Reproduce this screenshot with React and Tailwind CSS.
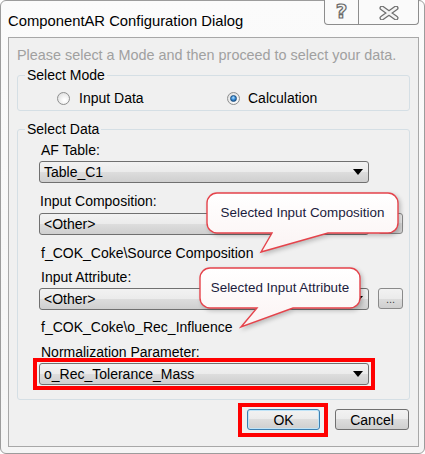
import React from 'react';

const btnGrad =
    'bg-[linear-gradient(to_bottom,#f2f2f2_0%,#ebebeb_50%,#dddddd_50%,#cfcfcf_100%)]';

function Combo({ text }) {
    return (
        <div className={`h-[22px] w-[330px] shrink-0 rounded-[3px] border border-[#707070] ${btnGrad} flex items-center pl-[4px] pr-[5px] text-[14px] leading-[16px]`}>
            <span>{text}</span>
            <svg className="ml-auto" width="10" height="6" viewBox="0 0 10 6">
                <polygon points="0,0 10,0 5,6" fill="#000" />
            </svg>
        </div>
    );
}

function DotsButton() {
    return (
        <div className={`ml-[9px] h-[21px] w-[25px] rounded-[3px] border border-[#8a8a8a] ${btnGrad} flex items-end justify-center pb-[3px] text-[11px] leading-none text-[#444]`}>
            ...
        </div>
    );
}

function Radio({ checked }) {
    return (
        <span className="w-[13px] h-[13px] rounded-full border border-[#8e8f8f] bg-[radial-gradient(circle_at_60%_65%,#ffffff_10%,#dcdcdc_90%)] flex items-center justify-center shrink-0">
            {checked && (
                <span className="w-[7px] h-[7px] rounded-full border border-[#1d4f7f] bg-[radial-gradient(circle_at_45%_35%,#b8e2ff_0%,#3a8ed8_45%,#0d3f78_100%)]" />
            )}
        </span>
    );
}

function Callout({ left, top, w, tail, text }) {
    const h = 40;
    const r = 10;
    const [a, tipX, tipY, b] = tail;
    const d = `M${r},0 H${w - r} A${r},${r} 0 0 1 ${w},${r} V${h - r} A${r},${r} 0 0 1 ${w - r},${h} H${b} L${tipX},${tipY} L${a},${h} H${r} A${r},${r} 0 0 1 0,${h - r} V${r} A${r},${r} 0 0 1 ${r},0 Z`;
    return (
        <div className="absolute" style={{ left, top, width: w, height: h }}>
            <svg
                className="absolute left-0 top-0 overflow-visible drop-shadow-[2px_2px_2px_rgba(0,0,0,0.22)]"
                width={w}
                height={h}
            >
                <defs>
                    <linearGradient id={`cg${left}`} x1="0" y1="0" x2="0" y2="1">
                        <stop offset="0" stopColor="#ffffff" />
                        <stop offset="1" stopColor="#fbf3f3" />
                    </linearGradient>
                </defs>
                <path d={d} fill={`url(#cg${left})`} stroke="#e5434b" strokeWidth="1.4" />
            </svg>
            <div className="relative h-full flex items-center justify-center text-[13.4px] text-[#1b1b3d]">
                {text}
            </div>
        </div>
    );
}

export default function App() {
    return (
        <div className="relative w-[425px] h-[454px] bg-white font-['Liberation_Sans',Arial,sans-serif] text-black">
            <div className="h-[454px] rounded-[6px] border border-[#9c9c9c] bg-[linear-gradient(to_bottom,#fbfbfb,#f5f5f5)] flex flex-col">
                {/* title bar */}
                <div className="h-[36px] flex items-start">
                    <div className="pl-[7px] pt-[10px] text-[14.8px] leading-[20px] text-black">
                        ComponentAR Configuration Dialog
                    </div>
                    <div className="ml-auto mr-[5px] flex h-[25px] -mt-[1px]">
                        <div className="w-[35px] h-full border border-t-0 border-[#8d8d8d] rounded-bl-[4px] bg-[#fafafa] flex items-center justify-center">
                            <span className="font-['DejaVu_Sans',sans-serif] font-bold text-[20px] leading-none text-[#f4f4f4] [-webkit-text-stroke:1.2px_#6a6a6a] -mt-[3px]">
                                ?
                            </span>
                        </div>
                        <div className="w-[60px] h-full border border-t-0 border-l-0 border-[#8d8d8d] rounded-br-[4px] bg-[#fafafa] flex items-center justify-center">
                            <svg width="20" height="14" viewBox="0 0 20 14" className="mt-[1px]">
                                <path d="M3,2 L17,12 M17,2 L3,12" stroke="#6f6f6f" strokeWidth="5" strokeLinecap="round" />
                                <path d="M3,2 L17,12 M17,2 L3,12" stroke="#f4f4f4" strokeWidth="2.6" strokeLinecap="round" />
                            </svg>
                        </div>
                    </div>
                </div>

                {/* client area */}
                <div className="ml-[7px] w-[411px] h-[410px] border border-[#a8a8a8] bg-[#f0f0f0] px-[8px] pt-[9px] flex flex-col text-[14px] leading-[16px]">
                    <div className="text-[14.4px] text-[#a0a0a0]">
                        Please select a Mode and then proceed to select your data.
                    </div>

                    <fieldset className="mt-[4px] border border-[#d5dfe5] rounded-[3px] pb-[4px]">
                        <legend className="ml-[7px] px-[2px] leading-[16px]">Select Mode</legend>
                        <div className="mt-[7px] h-[16px] pl-[39px] flex items-center">
                            <div className="w-[170px] flex items-center gap-[9px]">
                                <Radio />
                                <span>Input Data</span>
                            </div>
                            <div className="flex items-center gap-[8px]">
                                <Radio checked />
                                <span>Calculation</span>
                            </div>
                        </div>
                    </fieldset>

                    <fieldset className="mt-[10px] border border-[#d5dfe5] rounded-[3px] pb-[14px]">
                        <legend className="ml-[7px] px-[2px] leading-[16px]">Select Data</legend>
                        <div className="pl-[21px] flex flex-col">
                            <div className="mt-[5px] pl-[2px] h-[16px]">AF Table:</div>
                            <div className="mt-[3px]">
                                <Combo text="Table_C1" />
                            </div>
                            <div className="mt-[10px] pl-[1px] h-[16px]">Input Composition:</div>
                            <div className="mt-[4px] flex items-start">
                                <Combo text="<Other>" />
                                <DotsButton />
                            </div>
                            <div className="mt-[10px] pl-[2px] h-[16px]">f_COK_Coke\Source Composition</div>
                            <div className="mt-[8px] pl-[2px] h-[16px]">Input Attribute:</div>
                            <div className="mt-[3px] flex items-start">
                                <Combo text="<Other>" />
                                <DotsButton />
                            </div>
                            <div className="mt-[9px] pl-[2px] h-[16px]">f_COK_Coke\o_Rec_Influence</div>
                            <div className="mt-[9px] pl-[2px] h-[16px]">Normalization Parameter:</div>
                            <div className="mt-[3px] relative w-[330px]">
                                <Combo text="o_Rec_Tolerance_Mass" />
                                <div className="absolute -left-[6px] -right-[6px] -top-[5px] -bottom-[5px] border-4 border-[#ff0000]" />
                            </div>
                        </div>
                    </fieldset>

                    <div className="mt-[9px] flex justify-end gap-[15px] pr-[1px]">
                        <div className="relative">
                            <button
                                type="button"
                                className={`w-[73px] h-[21px] rounded-[3px] border border-[#3c7fb1] ${btnGrad} shadow-[inset_0_0_0_1px_#bfe4f8] text-[14px] leading-none`}
                            >
                                OK
                            </button>
                            <div className="absolute -left-[9px] -right-[8px] -top-[6px] -bottom-[7px] border-4 border-[#ff0000]" />
                        </div>
                        <button
                            type="button"
                            className={`w-[74px] h-[21px] rounded-[3px] border border-[#707070] ${btnGrad} text-[14px] leading-none`}
                        >
                            Cancel
                        </button>
                    </div>
                </div>
            </div>

            {/* annotation callouts */}
            <Callout left={207} top={193} w={191} tail={[65, 54, 59, 121]} text="Selected Input Composition" />
            <Callout left={200} top={268} w={160} tail={[57, 41, 59, 93]} text="Selected Input Attribute" />
        </div>
    );
}
